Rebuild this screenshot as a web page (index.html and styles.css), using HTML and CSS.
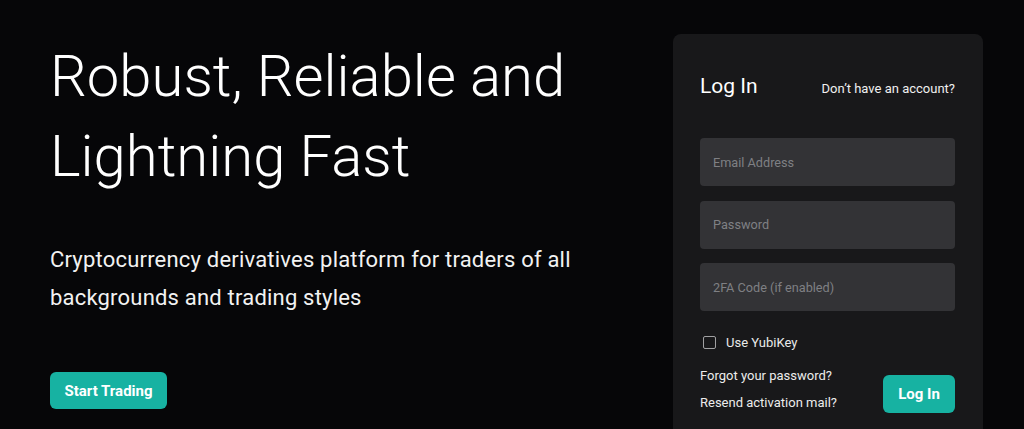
FILE: index.html
```html
<!DOCTYPE html>
<html lang="en">
<head>
<meta charset="utf-8">
<title>Log In</title>
<link rel="stylesheet" href="styles.css">
</head>
<body>
<main class="page">
  <section class="hero">
    <h1 class="hero-title">Robust, Reliable and<br>Lightning Fast</h1>
    <p class="hero-sub">Cryptocurrency derivatives platform for traders of all backgrounds and trading styles</p>
    <a class="btn btn-start" href="#">Start Trading</a>
  </section>
  <section class="card">
    <div class="card-head">
      <h2 class="card-title">Log In</h2>
      <a class="card-link" href="#">Don’t have an account?</a>
    </div>
    <form class="form">
      <input class="field" type="email" placeholder="Email Address">
      <input class="field" type="password" placeholder="Password">
      <input class="field" type="text" placeholder="2FA Code (if enabled)">
      <label class="check"><span class="box"></span><span>Use YubiKey</span></label>
      <div class="form-foot">
        <div class="links">
          <a href="#">Forgot your password?</a>
          <a href="#">Resend activation mail?</a>
        </div>
        <button class="btn btn-login" type="button">Log In</button>
      </div>
    </form>
  </section>
</main>
</body>
</html>
```

FILE: styles.css
```css
* { box-sizing: border-box; }
html, body { margin: 0; padding: 0; }
body {
  background: #060608;
  color: #fff;
  font-family: Roboto, "Liberation Sans", Arial, sans-serif;
  height: 429px;
  overflow: hidden;
}
a { color: inherit; text-decoration: none; }
.page {
  display: flex;
  align-items: flex-start;
  padding-left: 50px;
}
.hero {
  width: 623px;
  padding-top: 36px;
}
.hero-title {
  margin: 0;
  font-size: 58px;
  font-weight: 300;
  line-height: 80px;
  color: #fff;
}
.hero-sub {
  margin: 45px 0 0;
  font-size: 22px;
  letter-spacing: 0.2px;
  line-height: 38px;
  color: #f2f2f2;
  width: 570px;
}
.btn {
  display: inline-flex;
  align-items: center;
  justify-content: center;
  background: #17b2a2;
  color: #fff;
  border: 0;
  border-radius: 6px;
  font-family: inherit;
  font-weight: 700;
  font-size: 15px;
}
.btn-start {
  margin-top: 55px;
  width: 117px;
  height: 37px;
}
.card {
  margin-top: 34px;
  width: 310px;
  height: 395px;
  background: #18181a;
  border-radius: 8px 8px 0 0;
  padding: 38px 28px 0 27px;
}
.card-head {
  display: flex;
  justify-content: space-between;
  align-items: baseline;
}
.card-title {
  margin: 0;
  font-size: 21px;
  font-weight: 400;
  line-height: 28px;
  color: #fff;
}
.card-link {
  font-size: 13px;
  color: #f0f0f0;
}
.form {
  display: flex;
  flex-direction: column;
  margin-top: 38px;
}
.field {
  height: 48px;
  background: #333336;
  border: 0;
  border-radius: 4px;
  padding: 0 13px;
  font-family: inherit;
  font-size: 12.7px;
  color: #fff;
  margin-bottom: 14.5px;
  outline: none;
}
.field:last-of-type { margin-bottom: 0; }
.field::placeholder { color: #7f8084; }
.check {
  display: flex;
  align-items: center;
  gap: 10px;
  height: 20px;
  margin-top: 21px;
  padding-left: 3px;
  font-size: 13px;
  color: #eaeaea;
}
.box {
  width: 13px;
  height: 13px;
  border: 1.5px solid #a0a0a2;
  border-radius: 2px;
}
.form-foot {
  display: flex;
  justify-content: space-between;
  align-items: flex-start;
  margin-top: 10px;
}
.links {
  display: flex;
  flex-direction: column;
  font-size: 13px;
  line-height: 27px;
  color: #ececec;
}
.btn-login {
  margin-top: 13px;
  width: 72px;
  height: 38px;
  font-size: 15px;
}
```
